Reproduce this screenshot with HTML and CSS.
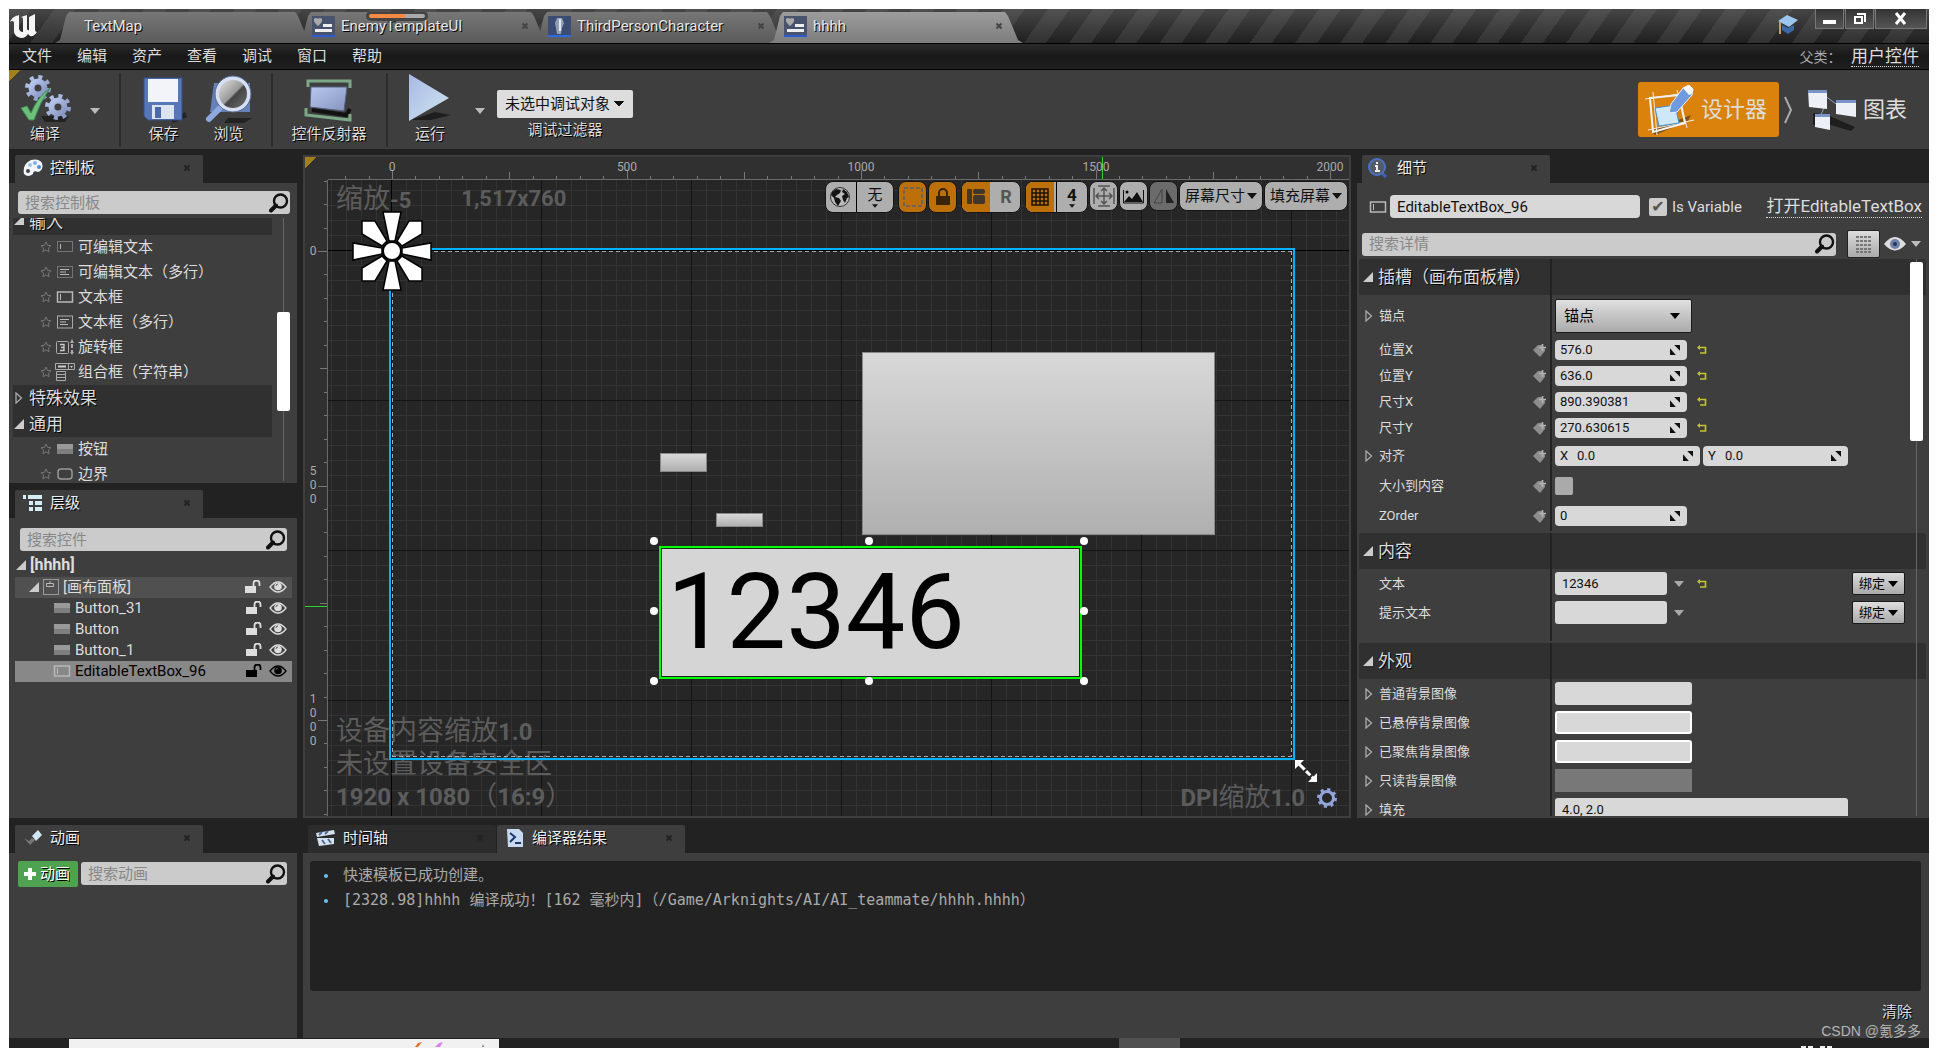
FILE: index.html
```
<!DOCTYPE html>
<html lang="zh-CN">
<head>
<meta charset="utf-8">
<title>hhhh</title>
<link rel="stylesheet" href="styles.css">
</head>
<body>
<svg class="defs" width="0" height="0" aria-hidden="true">
  <defs>
    <linearGradient id="steel" x1="0" y1="0" x2="1" y2="1"><stop offset="0" stop-color="#b9c8ee"/><stop offset="1" stop-color="#8494c0"/></linearGradient>
    <linearGradient id="ice" x1="0" y1="0" x2="1" y2="1"><stop offset="0" stop-color="#a9b8e6"/><stop offset="1" stop-color="#cfe6ee"/></linearGradient>
    <linearGradient id="lens" x1="0" y1="0" x2="1" y2="1"><stop offset="0" stop-color="#eee"/><stop offset=".5" stop-color="#999"/><stop offset=".55" stop-color="#444"/><stop offset="1" stop-color="#777"/></linearGradient>
  </defs>
  <symbol id="i-search" viewBox="0 0 20 20"><circle cx="11.500" cy="8" r="6.500" fill="none" stroke="#111" stroke-width="2.400"/><path d="M7 12.500 2 17.500" stroke="#111" stroke-width="4" stroke-linecap="round"/></symbol>
  <symbol id="i-star" viewBox="0 0 12 12"><path d="M6 1l1.500 3.300 3.500.4-2.600 2.400.7 3.600L6 8.900l-3.100 1.800.7-3.600L1 4.700l3.500-.4z" fill="none" stroke="#777"/></symbol>
  <symbol id="i-close" viewBox="0 0 8 8"><path d="M1.500 1.500l5 5M6.500 1.500l-5 5" stroke="currentColor" stroke-width="2"/></symbol>
  <symbol id="i-down" viewBox="0 0 10 6"><path d="M0 0h10L5 6z" fill="currentColor"/></symbol>
  <symbol id="i-open" viewBox="0 0 10 10"><path d="M10 0v10H0z" fill="#ccc"/></symbol>
  <symbol id="i-shut" viewBox="0 0 8 12"><path d="M1 1l5.500 5L1 11z" fill="none" stroke="#aaa" stroke-width="1.300"/></symbol>
  <symbol id="i-edit" viewBox="0 0 20 14"><rect x="2.500" y="1.500" width="15" height="10" fill="none" stroke="#aaa" stroke-dasharray="1 1"/><path d="M5.500 4v5" stroke="#bbb"/></symbol>
  <symbol id="i-editm" viewBox="0 0 20 14"><rect x="2.500" y="1.500" width="15" height="11" fill="none" stroke="#aaa" stroke-dasharray="1 1"/><path d="M5 4.500h9M5 7h6M5 9.500h9" stroke="#bbb"/></symbol>
  <symbol id="i-box" viewBox="0 0 20 14"><rect x="2.500" y="2" width="15" height="10" fill="none" stroke="#b8b8b8" stroke-width="1.500"/><path d="M5.500 4v6" stroke="#bbb"/></symbol>
  <symbol id="i-boxm" viewBox="0 0 20 14"><rect x="2.500" y="1" width="15" height="12" fill="none" stroke="#aaa"/><path d="M5 4.500h9M5 7h6M5 9.500h8" stroke="#bbb"/></symbol>
  <symbol id="i-spin" viewBox="0 0 20 16"><rect x="1.500" y="2.500" width="12" height="12" rx="1" fill="none" stroke="#aaa"/><path d="M5 5.500h4v6H5M6 8.500h3" fill="none" stroke="#ccc" stroke-width="1.300"/><path d="M15 4h4l-2-4zM16 5h2v4h-2zM16 11h2v2h-2zM15 13h4l-2 3z" fill="#aaa"/></symbol>
  <symbol id="i-combo" viewBox="0 0 20 18"><path d="M.5.500h19v6H.500zM13.500.500v6M1.500 8.500h9v9h-9zM1.500 11.500h9M1.500 14.500h9" fill="none" stroke="#aaa"/><path d="M3 3.500h8" stroke="#ccc" stroke-width="2"/><path d="M15 3h3l-1.500 2z" fill="#ccc"/></symbol>
  <symbol id="i-button" viewBox="0 0 20 14"><path d="M2 2h16v10H2z" fill="#999"/><path d="M2 7h16v5H2z" fill="#7e7e7e"/></symbol>
  <symbol id="i-border" viewBox="0 0 20 14"><rect x="3" y="2" width="14" height="10" rx="3" fill="none" stroke="#999" stroke-width="1.500"/></symbol>
  <symbol id="i-panel" viewBox="0 0 16 16"><rect x=".5" y=".5" width="15" height="15" fill="none" stroke="#999"/><path d="M3.500 4.500h7v3h-7zM7 4.500V2" fill="none" stroke="#bbb"/></symbol>
  <symbol id="i-lock" viewBox="0 0 16 14"><path d="M0 6h11v7H0z" fill="currentColor"/><path d="M8.500 6V3.500a3 3 0 016 0V6" fill="none" stroke="currentColor" stroke-width="1.800"/></symbol>
  <symbol id="i-eye" viewBox="0 0 18 12"><path d="M1 6q8-10 16 0-8 10-16 0z" fill="none" stroke="currentColor" stroke-width="1.300"/><circle cx="9" cy="5.500" r="3.800" fill="currentColor"/><path d="M7 5q0-2 2-2" stroke="#555" fill="none"/></symbol>
  <symbol id="i-umg" viewBox="0 0 23 21"><path d="M0 0h23v19H0z" fill="#48546e"/><path d="M0 19h23v2H0z" fill="#2d5bd0"/><path d="M2 3q2-2 4 0 2-2 4 0 1 3-4 7-5-4-4-7z" fill="#aaa"/><path d="M11 8h9v3h-9zM3 13h17v3H3z" fill="#eee"/></symbol>
  <symbol id="i-tag" viewBox="0 0 13 14"><path d="M0 7l5-5h4l3 4v2l-5 6z" fill="#8d8d8d"/><path d="M9.500 1v7M6 4.500h7" stroke="#b4b4b4" stroke-width="1.600"/></symbol>
  <symbol id="i-drag" viewBox="0 0 12 12"><path d="M5 0h7v7zM0 4l7 8H0z" fill="#111"/></symbol>
  <symbol id="i-reset" viewBox="0 0 10 10"><path d="M1 2.500h7.500v5.500H3" fill="none" stroke="#c3c52c" stroke-width="1.600"/><path d="M0 2.500 3 0v5z" fill="#c3c52c"/></symbol>
</svg>

<div class="app">
  <header class="titlebar">
    <svg class="logo" width="46" height="32" viewBox="0 0 46 32"><path d="M1 11C3 6 7 5 10 4v14q1 3 4 3V7l-2-1 6-2v14q1 2 2 1V6l6-3v15q0 3 2 3-3 5-7 4l-2-2q-4 6-10 3-4-2-4-6V11q-2-2-4 0z" fill="#f5f5f5"/></svg>
    <nav class="tabs">
      <button class="tab first"><span>TextMap</span></button>
      <button class="tab second"><svg width="23" height="21"><use href="#i-umg"/></svg><span>EnemyTemplateUI</span><svg class="x" width="8" height="8"><use href="#i-close"/></svg><i class="progress"></i></button>
      <button class="tab third"><svg width="23" height="21" viewBox="0 0 23 21"><path d="M0 0h23v19H0z" fill="#3b4c74"/><path d="M0 19h23v2H0z" fill="#2d6be0"/><path d="M9 2h5l2 5-2 5-1 6H9l-1-6-1-5z" fill="#8fa0b4"/><path d="M11 3h2v12h-2z" fill="#e4e9ee"/></svg><span>ThirdPersonCharacter</span><svg class="x" width="8" height="8"><use href="#i-close"/></svg></button>
      <button class="tab active"><svg width="23" height="21"><use href="#i-umg"/></svg><span>hhhh</span><svg class="x" width="8" height="8"><use href="#i-close"/></svg></button>
    </nav>
    <svg class="cap" width="20" height="20" viewBox="0 0 20 20"><path d="M4 10l6 3 6-3v5l-6 4-6-4z" fill="#3c69a8"/><path d="M0 6l9-6 11 5-9 7z" fill="#9cc6ee"/><path d="M2 7v12" stroke="#c2a06c" stroke-width="2"/></svg>
    <div class="winbtns">
      <button aria-label="最小化"><svg width="14" height="12"><path d="M0 7h13v4H0z" fill="#fff"/></svg></button>
      <button aria-label="还原"><svg width="14" height="13"><path d="M4 2h8v8M2 5h7v6H2z" fill="none" stroke="#fff" stroke-width="2"/></svg></button>
      <button class="wide" aria-label="关闭"><svg width="14" height="13"><path d="M2 1l9 11M11 1 2 12" stroke="#fff" stroke-width="3"/></svg></button>
    </div>
  </header>

  <div class="menubar">
    <nav><button>文件</button><button>编辑</button><button>资产</button><button>查看</button><button>调试</button><button>窗口</button><button>帮助</button></nav>
    <p>父类： <a href="#">用户控件</a></p>
  </div>

  <div class="toolbar">
    <button class="tool compile"><svg width="52" height="50" viewBox="0 0 52 50"><path d="M22 42h28l-4 6H26z" fill="#111" opacity=".6"/><g fill="none" stroke="url(#steel)"><circle cx="19" cy="14" r="6.500" stroke-width="6"/><circle cx="19" cy="14" r="11" stroke-width="4" stroke-dasharray="4 4.640"/><circle cx="39" cy="33" r="6.500" stroke-width="6"/><circle cx="39" cy="33" r="11" stroke-width="4" stroke-dasharray="4 4.640"/></g><path d="M2 34l6-2 4 7Q18 24 31 14 21 28 15 46h-5z" fill="#6cc07c" stroke="#3f8b50"/></svg><span>编译</span></button>
    <button class="more" aria-label="编译选项"><svg width="10" height="6"><use href="#i-down"/></svg></button>
    <i class="sep wide"></i>
    <button class="tool"><svg width="46" height="50" viewBox="0 0 46 50"><path d="M30 46l14-8 2 5-14 6z" fill="#111" opacity=".6"/><path d="M3 4h38v42H7l-4-4z" fill="#5877b8" stroke="#34508c"/><path d="M7 5h30v23H7z" fill="#f2f4fa"/><path d="M11 31h22v14H11z" fill="#dde3f0"/><path d="M14 33h6v11h-6z" fill="#4b69a8"/></svg><span>保存</span></button>
    <button class="tool"><svg width="50" height="50" viewBox="0 0 50 50"><path d="M24 44h24l-8 5H20z" fill="#111" opacity=".6"/><path d="M10 9h36v29H6z" fill="#6680b8"/><path d="M5 45l13-13" stroke="#8fa8e0" stroke-width="6" stroke-linecap="round"/><circle cx="29" cy="20" r="16" fill="url(#lens)" stroke="#d7dff3" stroke-width="4"/><circle cx="29" cy="20" r="18" fill="none" stroke="#51688f"/></svg><span>浏览</span></button>
    <i class="sep after"></i>
    <button class="tool reflect"><svg width="50" height="50" viewBox="0 0 50 50"><path d="M8 36l34 5 4-6" fill="none" stroke="#111" stroke-width="4"/><path d="M7 13h36l-3 24-34-4z" fill="url(#steel)" stroke="#555f80"/><path d="M4 13V7h42v7M2 34v7l44 5v-6" fill="none" stroke="#7ca888" stroke-width="3"/></svg><span>控件反射器</span></button>
    <i class="sep after"></i>
    <button class="tool run"><svg width="46" height="50" viewBox="0 0 46 50"><path d="M4 46l24-8 16 3-20 5z" fill="#111" opacity=".7"/><path d="M2 0l40 24L2 47z" fill="url(#ice)"/></svg><span>运行</span></button>
    <button class="more" aria-label="运行选项"><svg width="10" height="6"><use href="#i-down"/></svg></button>
    <div class="filter">
      <select id="dbg"><option>未选中调试对象</option></select>
      <label for="dbg">调试过滤器</label>
    </div>
    <div class="modes">
      <button class="mode on"><svg width="52" height="50" viewBox="0 0 52 50"><path d="M8 46l40-16-3 6-33 14z" fill="#222" opacity=".5"/><path d="M7 13l29-3 6 28-32 9z" fill="none" stroke="#f4f4f4" stroke-width="2"/><path d="M2 14l42-6M10 7l4 43M5 45l46-10M34 5l10 38" stroke="#eee"/><path d="M12 23l20-3 4 18-20 3z" fill="#cfe8f8" stroke="#4a90d0"/><path d="M26 28l2-9L40 3l6-3 4 4-1 6-15 17z" fill="#6f9ade" stroke="#eef"/><path d="M40 3l6-3 4 4-1 5-3 1z" fill="#f7f7f7"/></svg><span>设计器</span></button>
      <svg width="12" height="34" viewBox="0 0 12 34"><path d="M2 4l6 13-6 13" fill="none" stroke="#aaa" stroke-width="2"/></svg>
      <button class="mode"><svg width="50" height="46" viewBox="0 0 50 46"><path d="M6 26l14 2 14 6 14 6-4 4-20-6H6z" fill="#111" opacity=".7"/><path d="M18 9l14 10M18 18l-4 10" stroke="#8aa0c0"/><path d="M1 3h19v19l-18-2z" fill="#eef0f8"/><path d="M29 13h20v17l-20-3z" fill="#eef0f8"/><path d="M8 27h15v16L8 40z" fill="#eef0f8"/><path d="M1 3h19v3H1zM29 13h20v3H29zM8 27h15v3H8z" fill="#7b94c8"/></svg><span>图表</span></button>
    </div>
  </div>

  <main class="workspace">
    <div class="left">
      <section class="panel palette">
        <h2 class="ptab"><svg width="20" height="18" viewBox="0 0 20 18"><path d="M1 15Q-1 5 8 1q8-2 11 3 2 7-4 9-5-2-5 2-5 4-9 0z" fill="#f2f6fb"/><circle cx="5" cy="12" r="2" fill="#444"/><circle cx="7" cy="6" r="2" fill="#9cc4f0"/><circle cx="12" cy="4" r="2" fill="#79b0ee"/><circle cx="16" cy="8" r="2" fill="#4b8be0"/></svg>控制板<svg class="x" width="8" height="8"><use href="#i-close"/></svg></h2>
        <div class="pbody">
          <div class="search"><input aria-label="搜索控制板" placeholder="搜索控制板"><svg width="20" height="20"><use href="#i-search"/></svg></div>
          <div class="scroll">
            <ul class="widgets">
              <li class="cat cut"><svg width="10" height="10"><use href="#i-open"/></svg>输入</li>
              <li><svg width="12" height="12"><use href="#i-star"/></svg><svg width="20" height="14"><use href="#i-edit"/></svg>可编辑文本</li>
              <li><svg width="12" height="12"><use href="#i-star"/></svg><svg width="20" height="14"><use href="#i-editm"/></svg>可编辑文本（多行）</li>
              <li><svg width="12" height="12"><use href="#i-star"/></svg><svg width="20" height="14"><use href="#i-box"/></svg>文本框</li>
              <li><svg width="12" height="12"><use href="#i-star"/></svg><svg width="20" height="14"><use href="#i-boxm"/></svg>文本框（多行）</li>
              <li><svg width="12" height="12"><use href="#i-star"/></svg><svg width="20" height="16"><use href="#i-spin"/></svg>旋转框</li>
              <li><svg width="12" height="12"><use href="#i-star"/></svg><svg width="20" height="18"><use href="#i-combo"/></svg>组合框（字符串）</li>
              <li class="cat"><svg width="10" height="12"><use href="#i-shut"/></svg>特殊效果</li>
              <li class="cat"><svg width="10" height="10"><use href="#i-open"/></svg>通用</li>
              <li><svg width="12" height="12"><use href="#i-star"/></svg><svg width="20" height="14"><use href="#i-button"/></svg>按钮</li>
              <li><svg width="12" height="12"><use href="#i-star"/></svg><svg width="20" height="14"><use href="#i-border"/></svg>边界</li>
            </ul>
            <div class="bar"><i></i></div>
          </div>
        </div>
      </section>
      <section class="panel hierarchy">
        <h2 class="ptab"><svg width="20" height="16" viewBox="0 0 20 16"><path d="M0 0h3v4H0zM5 0h14v4H5zM6 6h4v4H6zM12 6h7v4h-7zM6 12h4v4H6zM12 12h7v4h-7z" fill="#d6ecf5"/></svg>层级<svg class="x" width="8" height="8"><use href="#i-close"/></svg></h2>
        <div class="pbody">
          <div class="search"><input aria-label="搜索控件" placeholder="搜索控件"><svg width="20" height="20"><use href="#i-search"/></svg></div>
          <ul class="tree">
            <li class="root"><svg width="10" height="10"><use href="#i-open"/></svg><b>[hhhh]</b></li>
            <li class="canvas"><svg width="10" height="10"><use href="#i-open"/></svg><svg width="16" height="16"><use href="#i-panel"/></svg><span>[画布面板]</span><svg width="16" height="14"><use href="#i-lock"/></svg><svg width="18" height="12"><use href="#i-eye"/></svg></li>
            <li><svg width="20" height="14"><use href="#i-button"/></svg><span>Button_31</span><svg width="16" height="14"><use href="#i-lock"/></svg><svg width="18" height="12"><use href="#i-eye"/></svg></li>
            <li><svg width="20" height="14"><use href="#i-button"/></svg><span>Button</span><svg width="16" height="14"><use href="#i-lock"/></svg><svg width="18" height="12"><use href="#i-eye"/></svg></li>
            <li><svg width="20" height="14"><use href="#i-button"/></svg><span>Button_1</span><svg width="16" height="14"><use href="#i-lock"/></svg><svg width="18" height="12"><use href="#i-eye"/></svg></li>
            <li class="sel"><svg width="20" height="14"><use href="#i-box"/></svg><span>EditableTextBox_96</span><svg width="16" height="14"><use href="#i-lock"/></svg><svg width="18" height="12"><use href="#i-eye"/></svg></li>
          </ul>
        </div>
      </section>
    </div>

    <section class="designer">
      <i class="corner"></i>
      <svg class="ruler top" width="100%" height="23">
        <path class="mark" d="M774.500 0v22"/>
        <path class="ticks" d="M17.500 19v3M41.500 19v3M64.500 13v9M87.500 19v3M111.500 19v3M134.500 19v3M158.500 19v3M181.500 15v7M205.500 19v3M228.500 19v3M252.500 19v3M275.500 19v3M299.500 13v9M322.500 19v3M345.500 19v3M369.500 19v3M392.500 19v3M416.500 15v7M439.500 19v3M463.500 19v3M486.500 19v3M510.500 19v3M533.500 13v9M556.500 19v3M580.500 19v3M603.500 19v3M627.500 19v3M650.500 15v7M674.500 19v3M697.500 19v3M721.500 19v3M744.500 19v3M768.500 13v9M791.500 19v3M814.500 19v3M838.500 19v3M861.500 19v3M885.500 15v7M908.500 19v3M932.500 19v3M955.500 19v3M979.500 19v3M1002.500 13v9"/>
        <g text-anchor="middle"><text x="64" y="14">0</text><text x="299" y="14">500</text><text x="533" y="14">1000</text><text x="768" y="14">1500</text><text x="1002" y="14">2000</text></g>
      </svg>
      <svg class="ruler side" width="23" height="100%">
        <path class="mark" d="M0 426.500h22"/>
        <path class="ticks" d="M19 1.500h3M19 24.500h3M19 48.500h3M13 71.500h9M19 94.500h3M19 118.500h3M19 141.500h3M19 165.500h3M15 188.500h7M19 212.500h3M19 235.500h3M19 259.500h3M19 282.500h3M13 306.500h9M19 329.500h3M19 352.500h3M19 376.500h3M19 399.500h3M15 423.500h7M19 446.500h3M19 470.500h3M19 493.500h3M19 517.500h3M13 540.500h9M19 563.500h3M19 587.500h3M19 610.500h3M19 634.500h3"/>
        <g text-anchor="middle"><text x="8" y="75">0</text><text x="8" y="295">5</text><text x="8" y="309">0</text><text x="8" y="323">0</text><text x="8" y="523">1</text><text x="8" y="537">0</text><text x="8" y="551">0</text><text x="8" y="565">0</text></g>
      </svg>
      <div class="viewport">
        <p class="hud tl"><span>缩放<b>-5</b></span><b>1,517x760</b></p>
        <div class="hud bl"><p>设备内容缩放<b>1.0</b></p><p>未设置设备安全区</p><p><b>1920 x 1080</b>（<b>16:9</b>）</p></div>
        <div class="hud br"><p><b>DPI</b>缩放<b>1.0</b></p><svg width="22" height="22" viewBox="0 0 22 22"><circle cx="11" cy="11" r="6.500" fill="none" stroke="#93a4da" stroke-width="3"/><circle cx="11" cy="11" r="8.500" fill="none" stroke="#93a4da" stroke-width="3" stroke-dasharray="3 3.670"/></svg></div>
        <div class="frame"></div>
        <div class="wbtn w1"></div><div class="wbtn w2"></div><div class="wbtn w3"></div>
        <input class="wtext" aria-label="EditableTextBox_96" value="12346">
        <i class="h l t"></i><i class="h c t"></i><i class="h r t"></i><i class="h l m"></i><i class="h r m"></i><i class="h l b"></i><i class="h c b"></i><i class="h r b"></i>
        <svg class="anchor" viewBox="-40 -40 80 80"><g fill="#fff" stroke="#000" stroke-width="1.500"><path d="M-9-39H9L3-10h-6z"/><path d="M-9 39H9L3 10h-6z"/><path d="M-39-8V9L-10 3v-6z"/><path d="M39-8V9L10 3v-6z"/><path d="M-30-30h13L-5-10l-5 5-20-12z"/><path d="M30-30H17L5-10l5 5 20-12z"/><path d="M-30 30h13L-5 10l-5-5-20 12z"/><path d="M30 30H17L5 10l5-5 20 12z"/></g><circle r="9" fill="#fff" stroke="#000" stroke-width="2"/></svg>
        <svg class="resize" viewBox="0 0 22 22"><path d="M4 4l14 14" stroke="#fff" stroke-width="3" stroke-dasharray="8 2 6 2"/><path d="M0 0h9L0 9zM22 22h-9l9-9z" fill="#fff"/></svg>
        <div class="tools">
          <div class="pill gap split"><button aria-label="本地化"><svg width="22" height="22" viewBox="0 0 22 22"><circle cx="11" cy="11" r="9.500" fill="#bbb" stroke="#333"/><path d="M3 6l4-3 5 1-1 3-3 2-2 2 4 1 2 3-3 5-3-4-1-4-3-3zM14 3l4 3 2 5-2 1-2 5-2-3-1-4 3-2-3-2z" fill="#151515"/></svg></button><button class="w37">无<svg width="6" height="4"><use href="#i-down"/></svg></button></div>
          <button class="pill on" aria-label="虚线框"><svg width="22" height="22"><rect x="2" y="2" width="18" height="18" fill="none" stroke="#6f6552" stroke-width="2" stroke-dasharray="4 2"/></svg></button>
          <button class="pill gap on" aria-label="锁定"><svg width="16" height="18" viewBox="0 0 16 18"><path d="M1 8h14v9H1z" fill="#3a2405"/><path d="M4 8V5a4 4 0 018 0v3" fill="none" stroke="#3a2405" stroke-width="2"/></svg></button>
          <div class="pill gap"><button class="on" aria-label="布局"><svg width="20" height="18"><rect x="1" y="1" width="5" height="15" rx="1" fill="#40362a"/><rect x="7" y="1" width="12" height="5" rx="2" fill="#40362a"/><rect x="7" y="7" width="12" height="9" rx="2" fill="#40362a"/></svg></button><button class="r">R</button></div>
          <div class="pill split"><button class="on" aria-label="网格"><svg width="18" height="18"><path d="M1 1h16v16H1zM5 1v16M9 1v16M13 1v16M1 5h16M1 9h16M1 13h16" fill="none" stroke="#1b1205" stroke-width="1.500"/></svg></button><button class="w33"><b>4</b><svg width="6" height="4"><use href="#i-down"/></svg></button></div>
          <button class="pill low" aria-label="布局变换"><svg width="22" height="22" viewBox="0 0 22 22"><path d="M1 3v16M21 3v16M5 1h12M5 21h12M11 3v16M3 11h16M8 6l3-3 3 3M8 16l3 3 3-3M6 8l-3 3 3 3M16 8l3 3-3 3" fill="none" stroke="#555" stroke-width="1.500"/></svg></button>
          <button class="pill low" aria-label="背景"><svg width="21" height="16" viewBox="0 0 21 16"><path d="M.5 2v13h20V2" fill="none" stroke="#111"/><path d="M1 14l5-6 3 3 5-7 6 10z" fill="#111"/><circle cx="4" cy="4" r="1.500"/></svg></button>
          <button class="pill low off" aria-label="镜像"><svg width="22" height="18"><path d="M9 2v14H1z" fill="none" stroke="#444"/><path d="M13 2v14h8z" fill="#222"/></svg></button>
          <button class="pill low word">屏幕尺寸<svg width="10" height="6"><use href="#i-down"/></svg></button>
          <button class="pill low word">填充屏幕<svg width="10" height="6"><use href="#i-down"/></svg></button>
        </div>
      </div>
    </section>

    <section class="panel details">
      <h2 class="ptab"><svg width="20" height="20" viewBox="0 0 20 20"><path d="M13 14l5 5" stroke="#3d63b8" stroke-width="3"/><circle cx="9" cy="9" r="8" fill="#555b66" stroke="#4a72c4" stroke-width="2"/><path d="M9 4v2M7 8h2v5M7 13h5" stroke="#eee" stroke-width="2" fill="none"/></svg>细节<svg class="x" width="8" height="8"><use href="#i-close"/></svg></h2>
      <div class="pbody">
        <div class="namerow"><svg width="20" height="14"><use href="#i-box"/></svg><input class="name" aria-label="名称" value="EditableTextBox_96"><label><input type="checkbox" checked>Is Variable</label><a href="#">打开EditableTextBox</a></div>
        <div class="findrow"><div class="search"><input aria-label="搜索详情" placeholder="搜索详情"><svg width="20" height="20"><use href="#i-search"/></svg></div><button class="gridbtn" aria-label="属性矩阵"><svg width="18" height="18"><path d="M1 2h3M1 6h3M1 10h3M1 14h3M1 17h3M5 2h12M5 6h12M5 10h12M5 14h12M5 17h12" stroke="#777" stroke-width="2" stroke-dasharray="3 1"/></svg></button><button class="viewbtn" aria-label="视图选项"><svg width="22" height="16" viewBox="0 0 22 16"><path d="M0 8q11-14 22 0-11 13-22 0z" fill="#ddd"/><circle cx="11" cy="8" r="5" fill="#6d83ab"/><circle cx="11" cy="8" r="2" fill="#26334f"/></svg><svg width="10" height="6"><use href="#i-down"/></svg></button></div>
        <div class="scroll">
          <div class="props">
            <h3><span><svg width="10" height="10"><use href="#i-open"/></svg>插槽（画布面板槽）</span></h3>
            <div class="row tall"><div><svg width="8" height="12"><use href="#i-shut"/></svg><span>锚点</span></div><div><button class="anchorbtn">锚点<svg width="10" height="6"><use href="#i-down"/></svg></button></div></div>
            <div class="row"><div><label for="px">位置X</label><svg width="13" height="14"><use href="#i-tag"/></svg></div><div><span class="num"><input id="px" value="576.0"><svg width="10" height="10"><use href="#i-drag"/></svg></span><svg width="10" height="10"><use href="#i-reset"/></svg></div></div>
            <div class="row"><div><label for="py">位置Y</label><svg width="13" height="14"><use href="#i-tag"/></svg></div><div><span class="num"><input id="py" value="636.0"><svg width="10" height="10"><use href="#i-drag"/></svg></span><svg width="10" height="10"><use href="#i-reset"/></svg></div></div>
            <div class="row"><div><label for="sx">尺寸X</label><svg width="13" height="14"><use href="#i-tag"/></svg></div><div><span class="num"><input id="sx" value="890.390381"><svg width="10" height="10"><use href="#i-drag"/></svg></span><svg width="10" height="10"><use href="#i-reset"/></svg></div></div>
            <div class="row"><div><label for="sy">尺寸Y</label><svg width="13" height="14"><use href="#i-tag"/></svg></div><div><span class="num"><input id="sy" value="270.630615"><svg width="10" height="10"><use href="#i-drag"/></svg></span><svg width="10" height="10"><use href="#i-reset"/></svg></div></div>
            <div class="row mid"><div><svg width="8" height="12"><use href="#i-shut"/></svg><span>对齐</span><svg width="13" height="14"><use href="#i-tag"/></svg></div><div class="pair"><span class="num"><label for="ax">X</label><input id="ax" value="0.0"><svg width="10" height="10"><use href="#i-drag"/></svg></span><span class="num"><label for="ay">Y</label><input id="ay" value="0.0"><svg width="10" height="10"><use href="#i-drag"/></svg></span></div></div>
            <div class="row mid"><div><label for="sc">大小到内容</label><svg width="13" height="14"><use href="#i-tag"/></svg></div><div><input id="sc" type="checkbox"></div></div>
            <div class="row mid"><div><label for="zo">ZOrder</label><svg width="13" height="14"><use href="#i-tag"/></svg></div><div><span class="num"><input id="zo" value="0"><svg width="10" height="10"><use href="#i-drag"/></svg></span></div></div>
            <h3><span><svg width="10" height="10"><use href="#i-open"/></svg>内容</span></h3>
            <div class="row txt"><div><label for="tx">文本</label></div><div><input id="tx" class="field" value="12346"><svg class="dd" width="10" height="6"><use href="#i-down"/></svg><svg width="10" height="10"><use href="#i-reset"/></svg><button class="bind">绑定<svg width="10" height="6"><use href="#i-down"/></svg></button></div></div>
            <div class="row txt"><div><label for="hx">提示文本</label></div><div><input id="hx" class="field" value=""><svg class="dd" width="10" height="6"><use href="#i-down"/></svg><button class="bind">绑定<svg width="10" height="6"><use href="#i-down"/></svg></button></div></div>
            <div class="row pad"><div></div><div></div></div>
            <h3><span><svg width="10" height="10"><use href="#i-open"/></svg>外观</span></h3>
            <div class="row txt"><div><svg width="8" height="12"><use href="#i-shut"/></svg><span>普通背景图像</span></div><div><i class="brush"></i></div></div>
            <div class="row txt"><div><svg width="8" height="12"><use href="#i-shut"/></svg><span>已悬停背景图像</span></div><div><i class="brush lit"></i></div></div>
            <div class="row txt"><div><svg width="8" height="12"><use href="#i-shut"/></svg><span>已聚焦背景图像</span></div><div><i class="brush lit"></i></div></div>
            <div class="row txt"><div><svg width="8" height="12"><use href="#i-shut"/></svg><span>只读背景图像</span></div><div><i class="brush dim"></i></div></div>
            <div class="row txt"><div><svg width="8" height="12"><use href="#i-shut"/></svg><label for="pd">填充</label></div><div><input id="pd" class="field long" value="4.0, 2.0"></div></div>
          </div>
          <div class="bar"><i></i></div>
        </div>
      </div>
    </section>
  </main>

  <div class="dock">
    <section class="panel anim">
      <h2 class="ptab"><svg width="20" height="16" viewBox="0 0 20 16"><path d="M1 8l6 7 5-5-3-2-3 3z" fill="#777"/><path d="M9 6l6-6 4 5-6 6z" fill="#cfe8f4"/></svg>动画<svg class="x" width="8" height="8"><use href="#i-close"/></svg></h2>
      <div class="pbody"><button class="add"><svg width="14" height="14"><path d="M7 1v12M1 7h12" stroke="#fff" stroke-width="4"/></svg>动画</button><div class="search"><input aria-label="搜索动画" placeholder="搜索动画"><svg width="20" height="20"><use href="#i-search"/></svg></div></div>
    </section>
    <section class="panel results">
      <div class="ptabs">
        <h2 class="ptab idle"><svg width="20" height="16" viewBox="0 0 20 16"><path d="M0 3l18-3 1 4-18 3zM1 8h17v6l-15 2z" fill="#d5e2ee"/><path d="M3 5l3-3M9 4l3-3M6 10l3 4M12 9l3 4" stroke="#4f6a96" stroke-width="2"/></svg>时间轴<svg class="x" width="8" height="8"><use href="#i-close"/></svg></h2>
        <h2 class="ptab"><svg width="20" height="20" viewBox="0 0 20 20"><path d="M2 1h12l4 4v14H3z" fill="#c9d9f2"/><path d="M5 5l5 4-5 5M10 15h6" fill="none" stroke="#1d3763" stroke-width="2"/></svg>编译器结果<svg class="x" width="8" height="8"><use href="#i-close"/></svg></h2>
      </div>
      <div class="pbody">
        <ul class="log"><li>快速模板已成功创建。</li><li>[2328.98]hhhh 编译成功！[162 毫秒内]（/Game/Arknights/AI/AI_teammate/hhhh.hhhh）</li></ul>
        <button class="clear">清除</button>
        <p class="credit">CSDN @氪多多</p>
      </div>
    </section>
  </div>
  <footer class="taskbar"><div class="popup"><svg width="100" height="8"><path d="M16 8l3-4 4-1-4 5z" fill="#e0702a"/><path d="M36 8l4-4 4-1-3 5z" fill="#d982ee"/><path d="M83 8l1-3 1 3z" fill="#777"/></svg></div><i class="block"></i><svg class="clock" width="36" height="10"><path d="M1 9h5M8 9h5M20 9h5M27 9h5" stroke="#eee" stroke-width="2"/></svg></footer>
</div>
</body>
</html>
```
FILE: styles.css
```
* { box-sizing: border-box; }
body { margin: 0; background: #fff; color: #ddd; font: 15px/20px Roboto, "Noto Sans CJK SC", sans-serif; }
h2, h3, p, ul { margin: 0; padding: 0; font-weight: 400; }
li { list-style: none; }
button, input, select { font: inherit; color: inherit; margin: 0; padding: 0; border: 0; background: none; }
button { white-space: nowrap; }
input { min-width: 0; }
svg { flex: none; display: block; }
a { color: #ddd; text-decoration: none; border-bottom: 1px dotted #ddd; }
.defs { position: absolute; }

.app { display: flex; flex-direction: column; height: 100vh; min-height: 900px; padding: 9px 9px 0; }

.titlebar { display: flex; flex: none; height: 34px; overflow: hidden;
  background: linear-gradient(rgba(90,90,90,.6), rgba(20,20,20,.4)), repeating-linear-gradient(125deg, #444 0 18px, #272727 18px 37px); }
.logo { margin: 2px 0 0 0; }
.tabs { display: flex; flex: 1; align-items: flex-end; }
.tab { position: relative; display: flex; align-items: center; height: 31px; padding: 0 20px 3px 15px; color: #e6e6e6; text-shadow: 1px 1px 0 #000;
  background: linear-gradient(#777, #5a5a5a); clip-path: polygon(0 100%, 5px 90%, 11px 4px, 14px 0, calc(100% - 18px) 0, calc(100% - 15px) 4px, calc(100% - 5px) 90%, 100% 100%); margin-right: -16px; }
.tab svg:first-child { margin-right: 6px; }
.tab .x { margin-left: auto; color: #444; }
.first { width: 258px; padding-left: 29px; }
.second { width: 252px; }
.third { width: 252px; }
.tab.active { width: 254px; background: linear-gradient(#9c9c9c, #7d7d7d); }
.progress { position: absolute; left: 69px; top: -1px; width: 62px; height: 10px; border: 3px solid #444; border-radius: 5px; background: linear-gradient(90deg, #f58a42 65%, #aaa 65%); }
.cap { margin: 6px 17px 0 0; }
.winbtns { display: flex; align-items: flex-start; gap: 1px; padding-right: 2px; }
.winbtns button { display: grid; place-items: center; width: 29px; height: 20px; border: 1px solid #777; border-top: 0; background: linear-gradient(#333, #555); }
.winbtns .wide { width: 52px; }

.menubar { display: flex; flex: none; align-items: center; justify-content: space-between; height: 27px; padding: 0 10px 1px 0; border: solid #000; border-width: 1px 0; background: linear-gradient(#2a2a2a, #181818 50%, #202020); }
.menubar button { padding: 0 12px 0 13px; }
.menubar p { color: #aaa; font-size: 14px; }
.menubar a { display: inline-block; margin-left: 6px; font-size: 17px; }

.toolbar { display: flex; flex: none; height: 79px; padding: 3px 20px 0 8px; background: linear-gradient(135deg, #a0801c 8px, #3e3e3e 8px); }
.tool { display: flex; flex-direction: column; align-items: center; width: 65px; text-shadow: 1px 1px 0 #000; }
.tool svg { margin-top: 1px; }
.tool.compile { width: 56px; }
.tool.reflect { width: 100px; }
.tool.run { width: 66px; }
.more { display: grid; place-items: center; width: 44px; color: #bbb; }
.sep { flex: none; width: 2px; height: 74px; background: #2c2c2c; }
.sep.wide { margin: 0 10px 0 2px; }
.sep.after { margin: 0 6px 0 10px; }
.reflect + .sep.after { margin-left: 7px; margin-right: 9px; }
.run + .more { width: 34px; }
.filter { display: flex; flex-direction: column; align-items: center; padding-top: 17px; }
.filter select { appearance: none; width: 136px; height: 28px; padding-left: 8px; color: #111; border-radius: 2px; background: linear-gradient(to bottom right, #111 49%, transparent 50%) 122px 11px / 5px 6px no-repeat, linear-gradient(to bottom left, #111 49%, transparent 50%) 117px 11px / 5px 6px no-repeat, #ddd; }
.filter label { padding-top: 2px; text-shadow: 1px 1px 0 #000; }
.modes { display: flex; align-items: center; gap: 4px; margin-left: auto; height: 73px; }
.mode { display: flex; align-items: center; gap: 6px; height: 55px; padding: 0 2px 0 8px; font-size: 22px; border-radius: 3px; }
.mode.on { width: 141px; padding-left: 5px; background: #da820c; }

.workspace { display: grid; flex: 1; grid-template-columns: 288px minmax(0, 1fr) 572px; gap: 6px; min-height: 0; padding-top: 6px; background: #222; }
.left { display: flex; flex-direction: column; gap: 7px; min-height: 0; }
.panel { display: flex; flex-direction: column; min-height: 0; min-width: 0; }
.palette { flex: 0 0 328px; }
.hierarchy { flex: 1; }
.ptab { display: flex; flex: none; align-items: center; gap: 7px; width: 188px; height: 28px; margin-left: 6px; padding: 0 12px 2px 8px; color: #eee; font-size: 15px; text-shadow: 1px 1px 0 #000; border-radius: 2px 2px 0 0; background: #3e3e3e; }
.ptab .x { margin-left: auto; color: #222; }
.ptabs { display: flex; gap: 1px; }
.ptabs .ptab { margin-left: 5px; }
.ptabs .ptab + .ptab { margin-left: 0; }
.ptab.idle { background: #2c2c2c; }
.pbody { display: flex; flex: 1; flex-direction: column; min-height: 0; background: #3e3e3e; }
.search { display: flex; flex: none; align-items: center; min-width: 0; height: 23px; padding-right: 1px; border-radius: 3px; background: #cbcbcb; }
.search input { flex: 1; padding-left: 7px; color: #222; outline: 0; }
.search input::placeholder { color: #888; opacity: 1; }
.palette .search { margin: 8px 7px 4px 9px; }
.scroll { position: relative; display: flex; flex: 1; min-height: 0; overflow: hidden; }
.widgets { flex: 1; margin-left: 4px; }
.widgets li { display: flex; align-items: center; gap: 3px; height: 25px; padding: 0 0 1px 27px; }
.widgets .cat { height: 26px; gap: 5px; padding-left: 1px; font-size: 17px; background: #303030; text-shadow: 1px 1px 0 #000; }
.widgets .cut { height: 17px; align-items: flex-end; overflow: hidden; line-height: 24px; }
.widgets .cut svg { margin-bottom: 9px; }
.bar { display: flex; justify-content: center; width: 22px; background: linear-gradient(#666, #666) 50% 0 / 1px 100% no-repeat; }
.bar i { width: 13px; height: 99px; margin-top: 94px; border-radius: 2px; background: #fff; }
.palette .bar { margin-right: 3px; }
.palette .pbody { padding-bottom: 2px; }

.hierarchy .search { margin: 10px 10px 4px 11px; }
.tree li { display: flex; align-items: center; height: 21px; margin: 0 5px 0 6px; padding: 0 5px 2px 37px; gap: 3px; }
.tree span { flex: 1; }
.tree span + svg { margin-right: 4px; }
.tree .root { height: 22px; padding-left: 1px; gap: 4px; font-size: 16px; }
.tree .canvas { padding-left: 14px; gap: 4px; background: #505050; }
.tree .sel { color: #000; background: #888; }

.designer { display: grid; grid-template: 23px minmax(0, 1fr) / 23px minmax(0, 1fr); border: 2px solid #3e3e3e; background: #303030; }
.corner { background: linear-gradient(135deg, #a0801c 8px, transparent 8px); }
.ruler { display: block; overflow: hidden; font-size: 12px; }
.ruler.top { border-bottom: 1px solid #6a6a6a; }
.ruler.side { border-right: 1px solid #6a6a6a; }
.ruler text { fill: #aaa; }
.ticks { stroke: #777; }
.mark { stroke: #2bd52b; }
.viewport { position: relative; overflow: hidden; background:
  linear-gradient(90deg, #000 1px, transparent 1px) 63px 0 / 5000px 100% no-repeat,
  linear-gradient(#000 1px, transparent 1px) 0 70px / 100% 5000px no-repeat,
  linear-gradient(90deg, #141414 1px, transparent 1px) 63px 0 / 150px 100%,
  linear-gradient(#141414 1px, transparent 1px) 0 70px / 100% 150px,
  linear-gradient(90deg, #333 1px, transparent 1px) 3px 0 / 15px 100%,
  linear-gradient(#333 1px, transparent 1px) 0 10px / 100% 15px, #262626; }
.hud { position: absolute; color: #5c5c5c; font-size: 27px; line-height: 32px; white-space: nowrap; }
.hud b { font-size: 24px; }
.tl { display: flex; left: 8px; top: 3px; gap: 50px; }
.tl b { font-size: 22px; }
.bl { left: 8px; bottom: 3px; }
.br { display: flex; align-items: center; right: 11px; bottom: 2px; gap: 11px; font-size: 26px; }
.br b { font-size: 24px; }
.frame { position: absolute; left: 61px; top: 68px; width: 906px; height: 512px; padding: 1px; border: 2px solid #00b2ff; }
.frame::after { content: ""; display: block; height: 100%; background:
  repeating-linear-gradient(90deg, #aaa 0 4px, transparent 4px 7px) 0 0 / 100% 1px no-repeat,
  repeating-linear-gradient(90deg, #aaa 0 4px, transparent 4px 7px) 0 100% / 100% 1px no-repeat,
  repeating-linear-gradient(#aaa 0 4px, transparent 4px 7px) 0 0 / 1px 100% no-repeat,
  repeating-linear-gradient(#aaa 0 4px, transparent 4px 7px) 100% 0 / 1px 100% no-repeat; }
.wbtn { position: absolute; border: 1px solid #888; background: linear-gradient(#d8d8d8, #b0b0b0); }
.w1 { left: 534px; top: 172px; width: 353px; height: 183px; }
.w2 { left: 332px; top: 273px; width: 47px; height: 19px; }
.w3 { left: 388px; top: 333px; width: 47px; height: 14px; }
.wtext { position: absolute; left: 331px; top: 366px; width: 423px; height: 133px; padding: 0 0 2px 6px; border: 2px solid #0f0; outline: 1px solid #222; outline-offset: -3px; background: #d5d5d5; color: #000; font-size: 106px; }
.h { position: absolute; width: 8px; height: 8px; border-radius: 50%; background: #fff; }
.h.l { left: 322px; } .h.c { left: 537px; } .h.r { left: 752px; }
.h.t { top: 357px; } .h.m { top: 427px; } .h.b { top: 497px; }
.anchor { position: absolute; left: 24px; top: 31px; width: 80px; height: 80px; }
.resize { position: absolute; left: 967px; top: 580px; width: 22px; height: 22px; }
.tools { position: absolute; top: 1px; right: 1px; display: flex; align-items: flex-start; gap: 1px; color: #111; }
.pill { display: flex; flex: none; align-items: center; justify-content: center; gap: 2px; min-width: 29px; height: 32px; border: 1px solid #151515; border-radius: 8px; background: #aeaeae; overflow: hidden; white-space: nowrap; }
.pill.low { width: 29px; height: 30px; }
.pill.word { width: 84px; }
.pill.gap { margin-right: 3px; }
.pill button { display: flex; flex-direction: column; align-items: center; justify-content: center; width: 28px; height: 100%; line-height: 18px; }
.pill.split button + button { border-left: 1px solid #000; }
.pill .w37 { width: 37px; } .pill .w33 { width: 31px; }
.pill > .r { color: #555; font-weight: 700; font-size: 18px; }
.pill b { font-size: 17px; }
.pill.on, .pill .on { background: #bd700a; }
.pill.off { background: #6b6b6b; }

.details .ptab { margin-left: 5px; padding-left: 6px; gap: 9px; }
.namerow { display: flex; flex: none; align-items: center; height: 49px; padding: 0 4px 2px 9px; }
.namerow .name { width: 250px; height: 23px; margin: 0 9px 0 2px; padding-left: 7px; border-radius: 4px; color: #111; background: #d8d8d8; }
.namerow label { display: flex; gap: 5px; align-items: center; }
.namerow a { margin-left: auto; font-size: 17px; line-height: 22px; }
input[type=checkbox] { appearance: none; width: 18px; height: 18px; border-radius: 2px; background: #aaa; }
input[type=checkbox]:checked { background: #ccc; }
input[type=checkbox]:checked::before { content: "✔"; display: block; color: #555; font: 16px/18px "DejaVu Sans", sans-serif; text-align: center; }
.findrow { display: flex; flex: none; align-items: center; height: 24px; margin-bottom: 3px; padding: 0 5px 0 3px; }
.findrow .search { flex: 1; margin-right: 11px; }
.gridbtn { display: grid; place-items: center; width: 33px; height: 28px; background: linear-gradient(#ddd, #aaa); border: 1px solid #222; border-radius: 2px; }
.viewbtn { display: flex; align-items: center; gap: 5px; width: 41px; padding-left: 4px; color: #bbb; }
.details .pbody { padding: 0 3px 2px 2px; }
.props { flex: 1; min-width: 0; }
.props h3 { display: flex; height: 36px; margin-top: 2px; background: #303030; font-size: 17px; text-shadow: 1px 1px 0 #000; border-radius: 3px 3px 0 0; }
.props h3:first-child { margin-top: 0; }
.props h3 span { display: flex; align-items: center; gap: 5px; width: 193px; padding: 0 0 1px 4px; border-right: 2px solid #222; white-space: nowrap; }
.row { display: flex; height: 26px; font-size: 13px; }
.row.tall { height: 42px; } .row.mid { height: 30px; } .row.txt { height: 29px; } .row.pad { height: 14px; }
.row > div { display: flex; align-items: center; }
.row > div:first-child { width: 193px; padding: 0 4px 0 20px; border-right: 2px solid #222; }
.row > div:first-child > svg:first-child { margin: 0 6px 0 -14px; }
.row > div:first-child > svg:last-child { margin-left: auto; }
.row > div:last-child { flex: 1; padding: 0 21px 0 3px; color: #aaa; }
.num { display: flex; align-items: center; width: 132px; height: 20px; margin-right: 10px; padding: 0 7px 0 5px; border-radius: 4px; background: #d8d8d8; color: #111; }
.num input { flex: 1; }
.num label { width: 17px; }
.pair .num { width: 145px; margin-right: 3px; }
.anchorbtn { display: flex; align-items: center; justify-content: space-between; width: 137px; height: 34px; padding: 0 11px 0 8px; border: 1px solid #1a1a1a; border-radius: 2px; background: linear-gradient(#e0e0e0, #aaa); color: #000; font-size: 15px; }
.field { width: 112px; height: 23px; padding-left: 7px; border-radius: 3px; background: #d8d8d8; color: #111; }
.field.long { width: 293px; }
.dd { margin: 0 13px 0 7px; }
.bind { display: flex; align-items: center; justify-content: center; gap: 3px; width: 53px; height: 23px; margin-left: auto; border: 1px solid #1a1a1a; border-radius: 2px; background: linear-gradient(#ddd, #aaa); color: #000; }
.brush { width: 137px; height: 23px; border-radius: 3px; background: #d8d8d8; }
.brush.lit { border: 2px solid #fff; }
.brush.dim { border-radius: 0; background: #787878; }
.details .bar { position: absolute; right: 0; top: 0; bottom: 0; width: 20px; }
.details .bar i { height: 179px; margin-top: 3px; }

.dock { display: grid; flex: none; grid-template-columns: 288px minmax(0, 1fr); gap: 6px; height: 220px; padding-top: 7px; background: #222; }
.anim .pbody { flex-direction: row; align-items: flex-start; padding: 8px 10px 8px 9px; gap: 3px; }
.anim .search { flex: 1; margin-top: 1px; }
.add { display: flex; flex: none; align-items: center; gap: 3px; width: 60px; height: 26px; padding-left: 5px; color: #fff; border-radius: 2px; background: #4fa350; text-shadow: 1px 1px 0 #000; }
.results .pbody { padding: 8px 8px 0 7px; }
.log { flex: none; height: 130px; padding: 2px 14px; border-radius: 3px; background: #222; color: #aaa; font: 15px/25px "DejaVu Sans Mono", "Noto Sans CJK SC", monospace; }
.log li { display: flex; }
.log li::before { content: ""; width: 4px; height: 4px; margin: 11px 15px 0 0; border-radius: 50%; background: #6cc0f5; }
.clear { align-self: flex-end; margin: 11px 9px 0 0; text-shadow: 1px 1px 0 #000; }
.credit { align-self: flex-end; color: #b5b5b5; font: 14px/18px "Liberation Sans", "Noto Sans CJK SC", sans-serif; }

.taskbar { display: flex; flex: none; height: 10px; padding-left: 60px; overflow: hidden; background: #222; }
.popup { display: flex; justify-content: flex-end; width: 430px; margin-top: 1px; background: #f1f1f1; }
.block { width: 61px; margin-left: 620px; background: #505050; }
.clock { margin: 0 93px 0 auto; }
```
